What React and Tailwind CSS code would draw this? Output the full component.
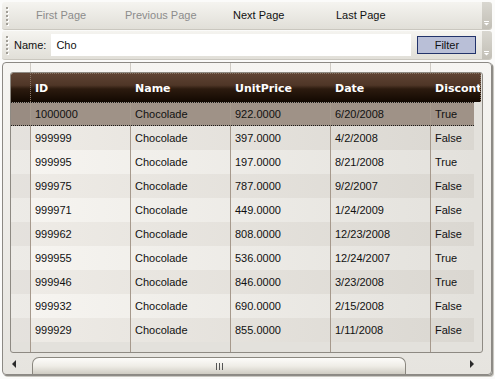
import React from "react";

// ─── Data ─────────────────────────────────────────────────────────────────────
const COLUMNS = ["ID", "Name", "UnitPrice", "Date", "Discontinued"];

const ROWS = [
  ["1000000", "Chocolade", "922.0000", "6/20/2008", "True"],
  ["999999", "Chocolade", "397.0000", "4/2/2008", "False"],
  ["999995", "Chocolade", "197.0000", "8/21/2008", "True"],
  ["999975", "Chocolade", "787.0000", "9/2/2007", "False"],
  ["999971", "Chocolade", "449.0000", "1/24/2009", "False"],
  ["999962", "Chocolade", "808.0000", "12/23/2008", "False"],
  ["999955", "Chocolade", "536.0000", "12/24/2007", "True"],
  ["999946", "Chocolade", "846.0000", "3/23/2008", "True"],
  ["999932", "Chocolade", "690.0000", "2/15/2008", "False"],
  ["999929", "Chocolade", "855.0000", "1/11/2008", "False"],
];

// ─── Toolbar bits ─────────────────────────────────────────────────────────────
function Gripper() {
  return (
    <div className="flex flex-col gap-[2px] ml-[4px]">
      {[0, 1, 2, 3, 4].map((i) => (
        <div key={i} className="w-[2px] h-[2px] bg-[#a19e96] shadow-[1px_1px_0_#ffffff]" />
      ))}
    </div>
  );
}

function Overflow() {
  return (
    <div className="w-[10px] self-stretch flex flex-col justify-end items-center pb-[3px] rounded-r-[3px] bg-gradient-to-b from-[#d9d7d0] to-[#c2bfb6]">
      <svg width="6" height="5" viewBox="0 0 6 5">
        <rect x="0" y="0" width="5" height="1" fill="#ffffff" />
        <path d="M0 2 L5 2 L2.5 4.5 Z" fill="#ffffff" />
      </svg>
    </div>
  );
}

function PagerBar() {
  return (
    <div className="ml-[2px] mt-[2px] w-[490px] h-[28px] flex items-center rounded-[3px] bg-gradient-to-b from-[#f5f4f0] to-[#e1dfd8] border-b border-[#cac7bf]">
      <Gripper />
      <div className="w-[117px] pl-[28px] text-[#8c8c8c]">First Page</div>
      <div className="w-[108px] text-[#8c8c8c]">Previous Page</div>
      <div className="w-[103px] text-[#111]">Next Page</div>
      <div className="text-[#111]">Last Page</div>
      <div className="flex-1" />
      <Overflow />
    </div>
  );
}

function FilterBar() {
  return (
    <div className="ml-[2px] mt-[1px] w-[490px] h-[29px] flex items-center rounded-[3px] bg-gradient-to-b from-[#f5f4f0] to-[#e1dfd8] border-b border-[#cac7bf]">
      <Gripper />
      <span className="ml-[6px] text-[#111]">Name:</span>
      <div className="ml-[5px] w-[360px] h-[22px] bg-white flex items-center pl-[5px] text-[#111]">
        Cho
      </div>
      <button className="ml-[6px] w-[59px] h-[18px] flex items-center justify-center bg-[#b9bfd7] border border-[#22336b] text-[#111]">
        Filter
      </button>
      <div className="flex-1" />
      <Overflow />
    </div>
  );
}

// ─── Grid ─────────────────────────────────────────────────────────────────────
function GridHeader() {
  return (
    <div className="w-[470px] h-[29px] shrink-0 flex overflow-hidden rounded-tl-[2px] bg-[linear-gradient(to_bottom,#5f4434_0%,#4f3627_42%,#2c1b0f_55%,#120801_100%)] font-['DejaVu_Sans',Verdana,sans-serif] font-bold text-[11px] text-white">
      <div className="w-[19px] shrink-0" />
      <div className="flex-1 flex overflow-hidden border-dotted border-l border-t border-r border-[#8a7767]">
        {COLUMNS.map((c) => (
          <div key={c} className="w-[100px] shrink-0 flex items-center pl-[4px] whitespace-nowrap">
            {c}
          </div>
        ))}
      </div>
    </div>
  );
}

function GridRow({ row, index }) {
  const selected = index === 0;
  const bg = selected
    ? "bg-[#9f9287] border-y border-dotted border-[#1a1a1a]"
    : index % 2 === 1
    ? "bg-gradient-to-r from-[#efece7] to-[#dad7d1]"
    : "bg-gradient-to-r from-[#f7f5f1] to-[#e3e1dc]";
  return (
    <div className={`h-[24px] flex shrink-0 ${bg}`}>
      <div className={`w-[19px] shrink-0 ${selected ? "bg-[#998c82]" : "bg-black/[0.04]"}`} />
      {row.map((v, i) => (
        <div
          key={i}
          className="w-[100px] shrink-0 flex items-center pl-[4px] border-l border-[#a6998c] whitespace-nowrap"
        >
          {v}
        </div>
      ))}
    </div>
  );
}

function HScroll() {
  return (
    <div className="h-[21px] flex items-center">
      <div className="w-[29px] shrink-0 flex items-center">
        <div className="ml-[9px] w-0 h-0 border-y-[4px] border-y-transparent border-r-[4px] border-r-[#2a2a2a]" />
      </div>
      <div className="self-end w-[374px] h-[17px] shrink-0 flex items-center justify-center rounded-t-[7px] border border-b-0 border-[#8a877f] bg-gradient-to-b from-[#fdfcfa] via-[#efede7] to-[#cfccc3]">
        <div className="flex gap-[2px]">
          <div className="w-[1px] h-[7px] bg-[#555]" />
          <div className="w-[1px] h-[7px] bg-[#555]" />
          <div className="w-[1px] h-[7px] bg-[#555]" />
        </div>
      </div>
      <div className="flex-1 flex justify-end pr-[17px]">
        <div className="w-0 h-0 border-y-[4px] border-y-transparent border-l-[4px] border-l-[#2a2a2a]" />
      </div>
    </div>
  );
}

function GridBox() {
  return (
    <div className="ml-[2px] mt-[2px] w-[490px] h-[313px] flex flex-col rounded-[4px] border border-[#8c8984] shadow-[1px_1px_0_#8e8c87,2px_2px_0_#c9c7c1] bg-gradient-to-b from-[#f6f5f2] to-[#e6e4df] overflow-hidden">
      {/* column guide lines above the header */}
      <div className="h-[9px] w-[480px] flex overflow-hidden pl-[7px]">
        <div className="w-[20px] shrink-0" />
        {COLUMNS.map((c) => (
          <div key={c} className="w-[100px] shrink-0 border-l border-[#cfcbc4]" />
        ))}
      </div>

      {/* inner grid */}
      <div className="ml-[7px] w-[473px] h-[281px] shrink-0 flex flex-col rounded-[3px] border border-[#8e8a83] bg-[#e3e1dc] overflow-hidden">
        <GridHeader />
        <div className="w-[463px] flex flex-col overflow-hidden">
          {ROWS.map((r, i) => (
            <GridRow key={i} row={r} index={i} />
          ))}
          <div className="h-[10px] flex shrink-0">
            <div className="w-[19px] shrink-0" />
            {COLUMNS.map((c) => (
              <div key={c} className="w-[100px] shrink-0 border-l border-[#a6998c]" />
            ))}
          </div>
        </div>
      </div>

      <HScroll />
    </div>
  );
}

export default function App() {
  return (
    <div className="w-[495px] h-[379px] overflow-hidden bg-[#fbfbfa] font-['Liberation_Sans',Arial,sans-serif] text-[11px] text-[#111] leading-none">
      <PagerBar />
      <FilterBar />
      <GridBox />
    </div>
  );
}
